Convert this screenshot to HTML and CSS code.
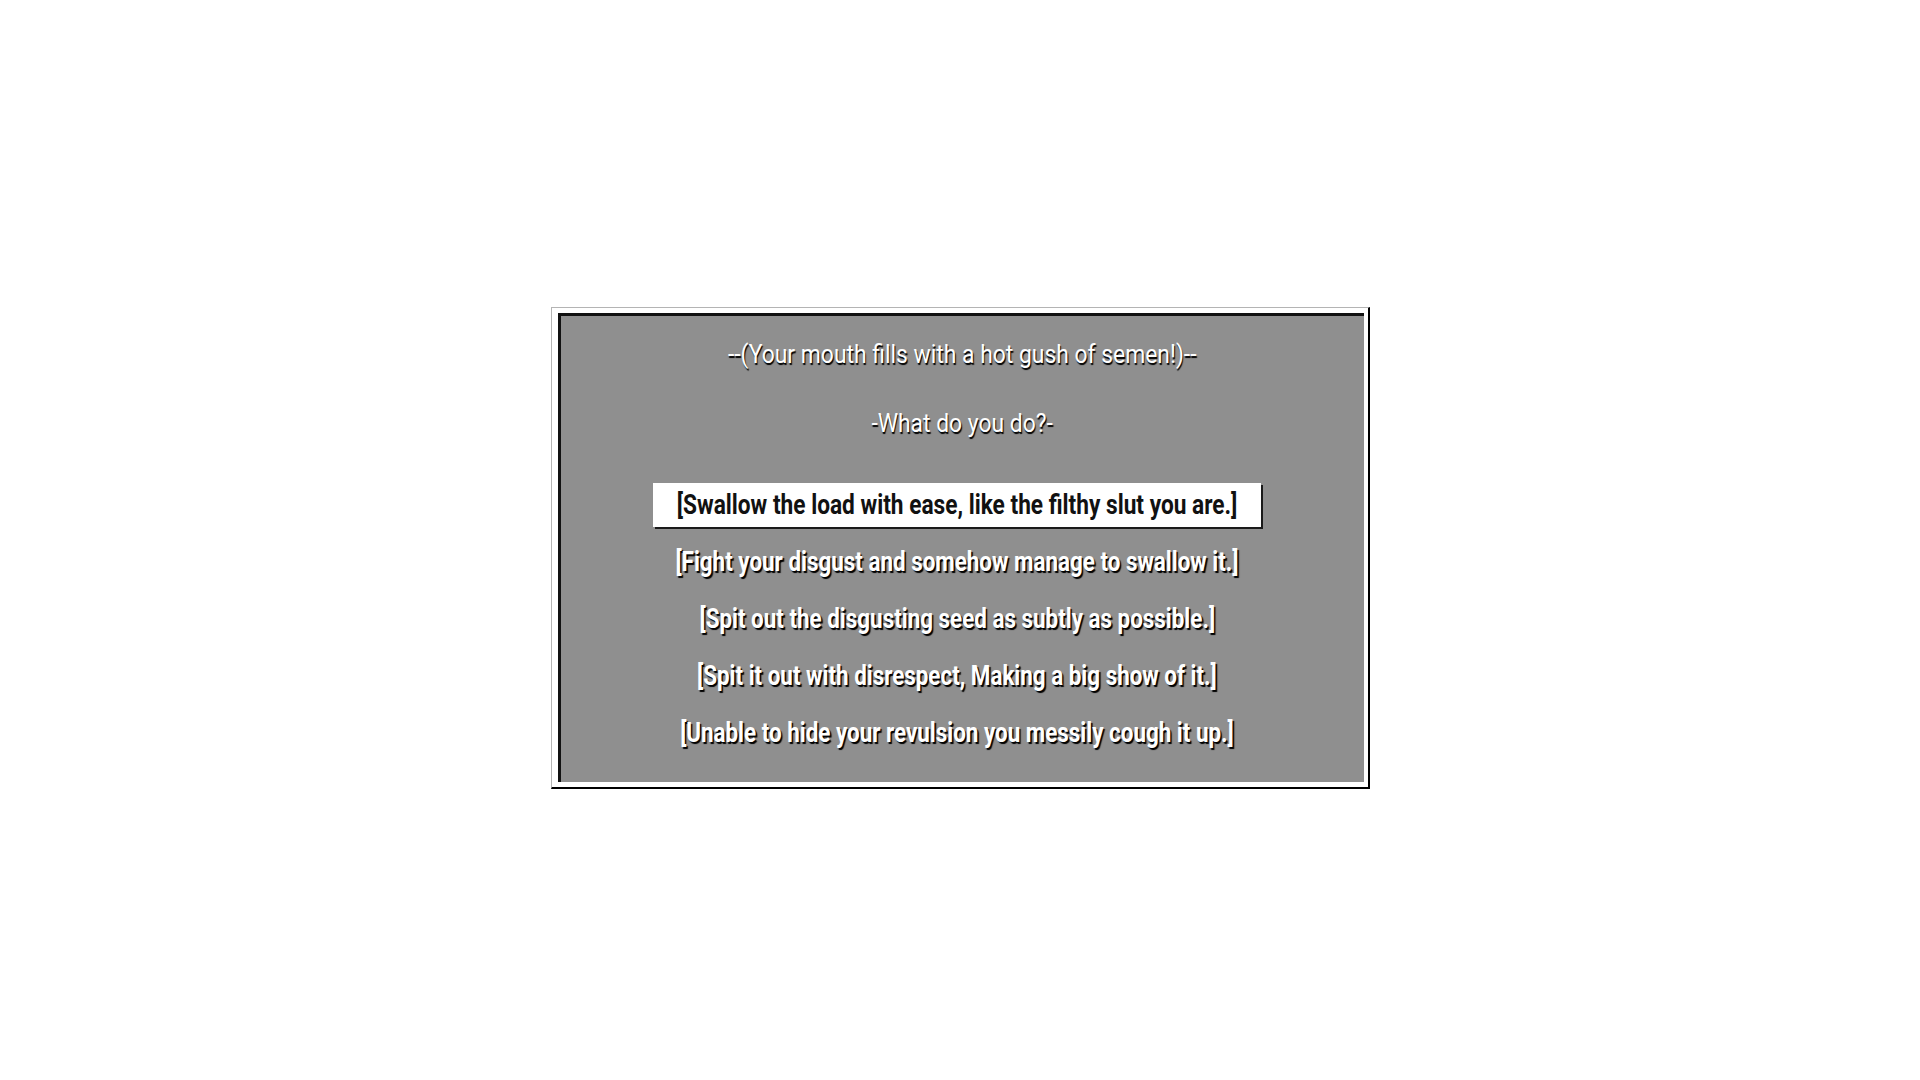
FILE: index.html
```html
<!DOCTYPE html>
<html lang="en">
<head>
<meta charset="utf-8">
<title>Choice</title>
<link rel="stylesheet" href="styles.css">
</head>
<body>
<div class="frame">
  <div class="panel">
    <p class="narration"><span class="cond">--(Your mouth fills with a hot gush of semen!)--</span></p>
    <p class="prompt"><span class="cond">-What do you do?-</span></p>
    <ul class="choices">
      <li class="choice selected"><span class="cond">[Swallow the load with ease, like the filthy slut you are.]</span></li>
      <li class="choice"><span class="cond">[Fight your disgust and somehow manage to swallow it.]</span></li>
      <li class="choice"><span class="cond">[Spit out the disgusting seed as subtly as possible.]</span></li>
      <li class="choice"><span class="cond">[Spit it out with disrespect, Making a big show of it.]</span></li>
      <li class="choice"><span class="cond">[Unable to hide your revulsion you messily cough it up.]</span></li>
    </ul>
  </div>
</div>
</body>
</html>
```
FILE: styles.css
```css
html, body {
  margin: 0;
  padding: 0;
  background: #ffffff;
}
body {
  font-family: Roboto, "Noto Sans", "DejaVu Sans", sans-serif;
}
.frame {
  box-sizing: border-box;
  width: 819px;
  margin: 307px auto 0;
  border-style: solid;
  border-width: 1px 2px 2px 1px;
  border-color: #b4b4b4 #000000 #000000 #b4b4b4;
  background: #ffffff;
  padding: 5px 4px 5px 6px;
}
.panel {
  box-sizing: border-box;
  height: 469px;
  background: #8f8f8f;
  border-style: solid;
  border-width: 3px 0 0 3px;
  border-color: #111111;
  padding-top: 23px;
  text-align: center;
  color: #ffffff;
}
.cond {
  display: inline-block;
  white-space: nowrap;
  transform: scaleX(0.8);
  transform-origin: center;
}
.narration, .prompt {
  margin: 0;
  font-size: 26px;
  line-height: 30px;
  text-shadow: 1px 2px 1px #000000;
}
.narration .cond, .prompt .cond {
  transform: scaleX(0.88);
}
.prompt {
  margin-top: 39px;
}
.choices {
  list-style: none;
  margin: 45px 0 0;
  padding: 0 10px 0 0;
  display: flex;
  flex-direction: column;
  align-items: center;
  gap: 13px;
}
.choice {
  display: flex;
  justify-content: center;
  font-size: 28px;
  font-weight: 700;
  line-height: 44px;
  height: 44px;
  text-shadow: 2px 2px 1px #000000;
}
.choice.selected {
  box-sizing: border-box;
  width: 608px;
  background: #ffffff;
  color: #111111;
  text-shadow: none;
  box-shadow: 2px 2px 0 #1a1a1a;
}
.choice.selected .cond {
  transform: scaleX(0.81);
}
```
